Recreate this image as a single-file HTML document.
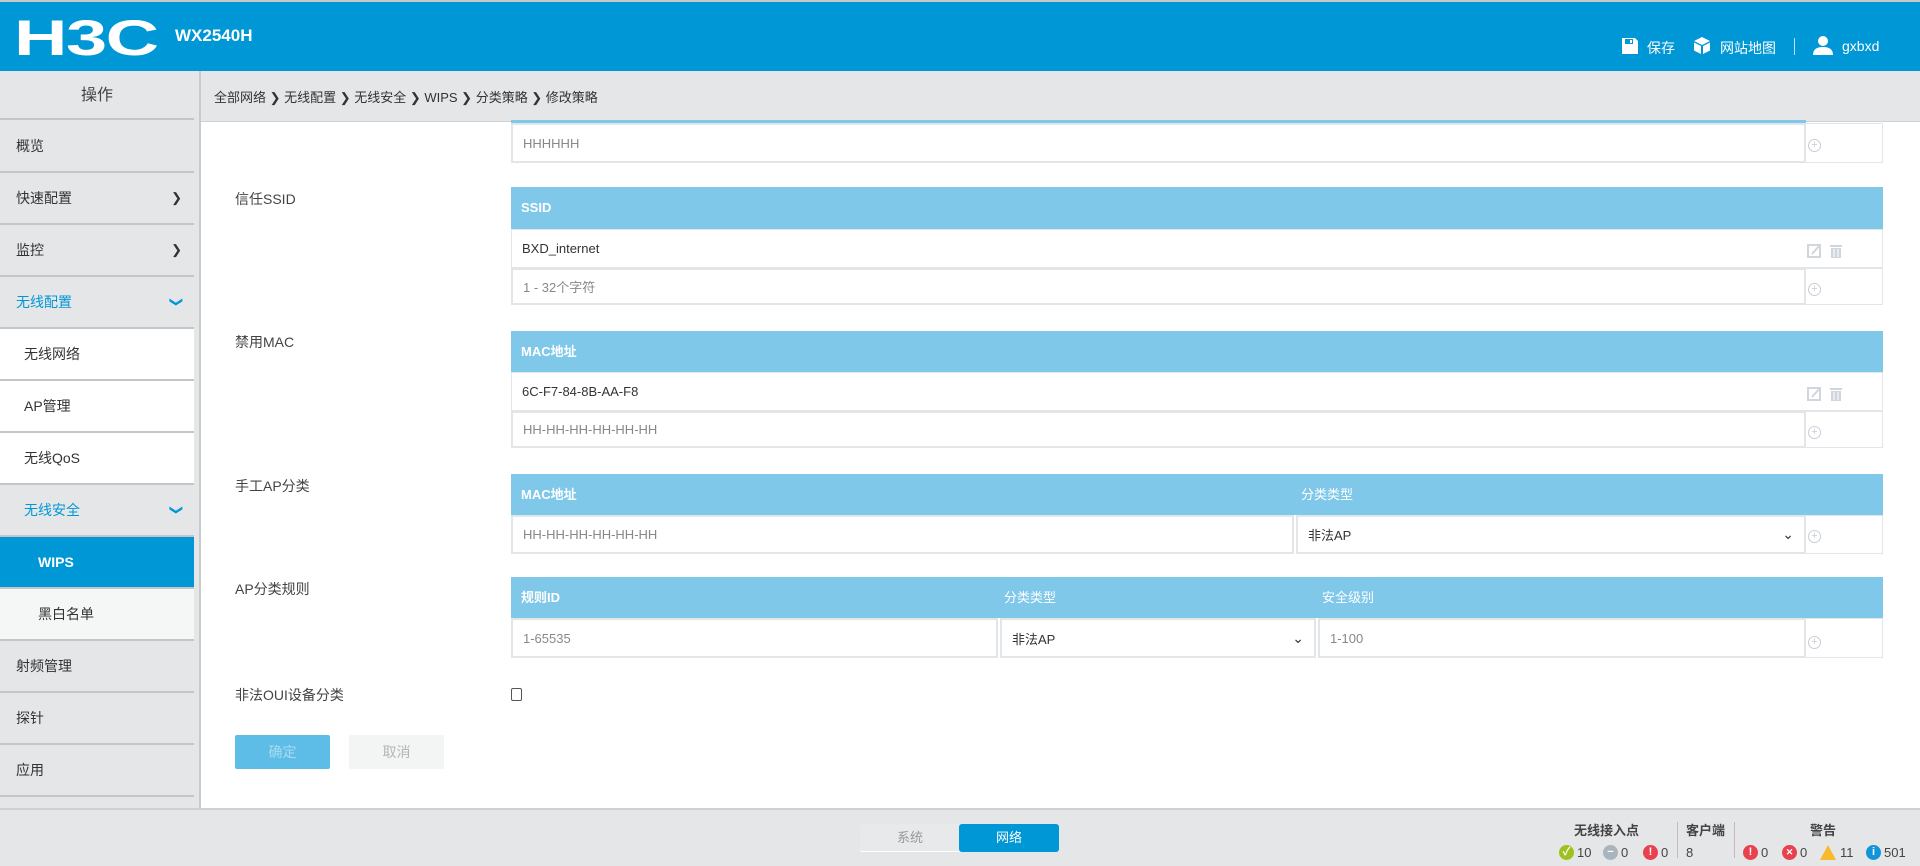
<!DOCTYPE html>
<html><head><meta charset="utf-8">
<style>
*{box-sizing:border-box;margin:0;padding:0}
body{width:1920px;height:866px;overflow:hidden;background:#fff;font-family:"Liberation Sans","Noto Sans CJK SC",sans-serif;color:#333;position:relative}
.a{position:absolute}
#hdr{left:0;top:0;width:1920px;height:71px;background:#0097d6;border-top:2px solid #c8c8c8}
#bc{left:0;top:71px;width:1920px;height:51px;background:#e5e6e8;border-bottom:1px solid #d0d0d0}
#side{left:0;top:71px;width:201px;height:737px;background:#e5e6e8;border-right:2px solid #c9cacb}
.it{position:absolute;left:0;width:194px;height:52px;line-height:50px;font-size:14px;border-bottom:2px solid #c4c5c6;padding-left:16px;color:#333}
.it.g{background:#e5e6e8}.it.w{background:#fff;padding-left:24px}
.chev{position:absolute;right:12px;top:0;font-size:13px}
.lbl{position:absolute;left:235px;font-size:14px;color:#444}
.th{position:absolute;background:#7fc8ea;color:#fff;font-size:13px;font-weight:bold;height:42px;line-height:42px;padding-left:10px}
.cell{position:absolute;border:2px solid #e3e6e8;background:#fff;font-size:13px;color:#888;padding-left:10px;display:flex;align-items:center}
.act{position:absolute;border:1px solid #e3e6e8;border-left:none;background:#fff}
.plus{position:absolute;width:13px;height:13px;border:1px solid #c8ced6;border-radius:50%;color:#c8ced6;font-size:11px;line-height:11px;text-align:center}
.dd{position:absolute;right:10px;font-size:14px;color:#333}
.st{position:absolute;font-size:13px;color:#444;display:flex;align-items:center;height:16px}
.ic{display:inline-block;width:15px;height:15px;border-radius:50%;color:#fff;font-size:11px;font-weight:bold;text-align:center;line-height:15px;margin-right:3px}
</style></head><body>
<div id="hdr" class="a">
 <div class="a" style="left:14px;top:6px;color:#fff;font-size:50px;font-weight:bold;letter-spacing:-1px;transform:scaleX(1.48);transform-origin:left;line-height:60px">H3C</div>
 <div class="a" style="left:175px;top:24px;color:#fff;font-size:17px;font-weight:bold">WX2540H</div>
 <svg class="a" style="left:1621px;top:35px" width="18" height="18" viewBox="0 0 18 18"><path d="M1 1h13l3 3v13H1z" fill="#fff"/><rect x="4" y="2" width="8" height="5" fill="#0097d6"/><rect x="9" y="3" width="2" height="3" fill="#fff"/></svg>
 <div class="a" style="left:1647px;top:36px;color:#fff;font-size:14px">保存</div>
 <svg class="a" style="left:1693px;top:34px" width="18" height="19" viewBox="0 0 18 19"><path d="M9 1l8 4-8 4-8-4z" fill="#fff"/><path d="M1 6.5l7 3.5v8l-7-3.5zM17 6.5l-7 3.5v8l7-3.5z" fill="#fff"/></svg>
 <div class="a" style="left:1720px;top:36px;color:#fff;font-size:14px">网站地图</div>
 <div class="a" style="left:1794px;top:36px;width:1px;height:17px;background:#bfe3f4"></div>
 <svg class="a" style="left:1813px;top:33px" width="20" height="20" viewBox="0 0 20 20"><circle cx="10" cy="6" r="5" fill="#fff"/><path d="M0 20c0-6 4-8 10-8s10 2 10 8z" fill="#fff"/></svg>
 <div class="a" style="left:1842px;top:36px;color:#fff;font-size:14px">gxbxd</div>
</div>
<div id="bc" class="a"><div class="a" style="left:214px;top:16px;font-size:13px;color:#333">全部网络 ❯ 无线配置 ❯ 无线安全 ❯ WIPS ❯ 分类策略 ❯ 修改策略</div></div>
<div id="side" class="a">
 <div class="a" style="left:0;top:0;width:194px;height:49px;line-height:49px;text-align:center;font-size:16px;color:#444;border-bottom:2px solid #c4c5c6">操作</div>
 <div class="it g" style="top:50px">概览</div>
 <div class="it g" style="top:102px">快速配置<span class="chev">❯</span></div>
 <div class="it g" style="top:154px">监控<span class="chev">❯</span></div>
 <div class="it g" style="top:206px;color:#0097d6">无线配置<span class="chev" style="transform:rotate(90deg);color:#0097d6">❯</span></div>
 <div class="it w" style="top:258px">无线网络</div>
 <div class="it w" style="top:310px">AP管理</div>
 <div class="it w" style="top:362px">无线QoS</div>
 <div class="it g" style="top:414px;color:#0097d6;padding-left:24px">无线安全<span class="chev" style="transform:rotate(90deg);color:#0097d6">❯</span></div>
 <div class="it" style="top:466px;background:#0097d6;color:#fff;font-weight:bold;padding-left:38px">WIPS</div>
 <div class="it" style="top:518px;background:#f5f6f6;padding-left:38px">黑白名单</div>
 <div class="it g" style="top:570px">射频管理</div>
 <div class="it g" style="top:622px">探针</div>
 <div class="it g" style="top:674px">应用</div>
</div>

<div class="a" style="left:511px;top:120px;width:1295px;height:3px;background:#7fc8ea"></div>
<div class="cell" style="left:511px;top:123px;width:1295px;height:40px">HHHHHH</div>
<div class="act" style="left:1806px;top:123px;width:77px;height:40px"></div>
<div class="plus" style="left:1808px;top:139px">+</div>

<div class="lbl" style="top:189px">信任SSID</div>
<div class="th" style="left:511px;top:187px;width:1372px">SSID</div>
<div class="cell" style="left:511px;top:229px;width:1372px;height:39px;border:1px solid #e3e6e8;color:#333">BXD_internet</div>
<svg class="a" style="left:1807px;top:243px" width="40" height="16" viewBox="0 0 40 16"><rect x="1" y="2" width="12" height="12" fill="none" stroke="#d0d6de" stroke-width="2"/><path d="M5 11l8-9" stroke="#d0d6de" stroke-width="2"/><rect x="23" y="2" width="12" height="2" fill="#d0d6de"/><rect x="24" y="5" width="10" height="10" fill="#d0d6de"/><path d="M27 6v8M31 6v8" stroke="#fff"/></svg>
<div class="cell" style="left:511px;top:268px;width:1295px;height:37px">1 - 32个字符</div>
<div class="act" style="left:1806px;top:268px;width:77px;height:37px"></div>
<div class="plus" style="left:1808px;top:283px">+</div>

<div class="lbl" style="top:332px">禁用MAC</div>
<div class="th" style="left:511px;top:331px;width:1372px">MAC地址</div>
<div class="cell" style="left:511px;top:372px;width:1372px;height:39px;border:1px solid #e3e6e8;color:#333">6C-F7-84-8B-AA-F8</div>
<svg class="a" style="left:1807px;top:386px" width="40" height="16" viewBox="0 0 40 16"><rect x="1" y="2" width="12" height="12" fill="none" stroke="#d0d6de" stroke-width="2"/><path d="M5 11l8-9" stroke="#d0d6de" stroke-width="2"/><rect x="23" y="2" width="12" height="2" fill="#d0d6de"/><rect x="24" y="5" width="10" height="10" fill="#d0d6de"/><path d="M27 6v8M31 6v8" stroke="#fff"/></svg>
<div class="cell" style="left:511px;top:411px;width:1295px;height:37px">HH-HH-HH-HH-HH-HH</div>
<div class="act" style="left:1806px;top:411px;width:77px;height:37px"></div>
<div class="plus" style="left:1808px;top:426px">+</div>

<div class="lbl" style="top:476px">手工AP分类</div>
<div class="th" style="left:511px;top:474px;width:1372px;height:41px;line-height:41px">MAC地址</div>
<div class="a" style="left:1301px;top:474px;color:#fff;font-size:13px;line-height:41px">分类类型</div>
<div class="cell" style="left:511px;top:515px;width:783px;height:39px">HH-HH-HH-HH-HH-HH</div>
<div class="cell" style="left:1296px;top:515px;width:510px;height:39px;color:#333">非法AP<span class="dd">⌄</span></div>
<div class="act" style="left:1806px;top:515px;width:77px;height:39px"></div>
<div class="plus" style="left:1808px;top:530px">+</div>

<div class="lbl" style="top:579px">AP分类规则</div>
<div class="th" style="left:511px;top:577px;width:1372px;height:41px;line-height:41px">规则ID</div>
<div class="a" style="left:1004px;top:577px;color:#fff;font-size:13px;line-height:41px">分类类型</div>
<div class="a" style="left:1322px;top:577px;color:#fff;font-size:13px;line-height:41px">安全级别</div>
<div class="cell" style="left:511px;top:618px;width:487px;height:40px">1-65535</div>
<div class="cell" style="left:1000px;top:618px;width:316px;height:40px;color:#333">非法AP<span class="dd">⌄</span></div>
<div class="cell" style="left:1318px;top:618px;width:488px;height:40px">1-100</div>
<div class="act" style="left:1806px;top:618px;width:77px;height:40px"></div>
<div class="plus" style="left:1808px;top:636px">+</div>

<div class="lbl" style="top:685px">非法OUI设备分类</div>
<div class="a" style="left:511px;top:688px;width:11px;height:13px;border:1px solid #555;border-radius:2px"></div>

<div class="a" style="left:235px;top:735px;width:95px;height:34px;background:#5dbde6;border-radius:2px;color:#a9dcf2;font-size:14px;text-align:center;line-height:34px">确定</div>
<div class="a" style="left:349px;top:735px;width:95px;height:34px;background:#f3f4f4;border-radius:2px;color:#b5b5b5;font-size:14px;text-align:center;line-height:34px">取消</div>

<div class="a" style="left:0;top:808px;width:1920px;height:58px;background:#e5e6e8;border-top:2px solid #cfd0d2"></div>
<div class="a" style="left:860px;top:824px;width:100px;height:28px;border-radius:3px 0 0 3px;background:#e8e9eb;border-bottom:1px solid #fff;color:#999;font-size:13px;text-align:center;line-height:28px">系统</div>
<div class="a" style="left:959px;top:824px;width:100px;height:28px;border-radius:3px;background:#0097d6;color:#fff;font-size:13px;text-align:center;line-height:28px">网络</div>

<div class="st" style="left:1574px;top:821px;font-weight:bold">无线接入点</div>
<div class="st" style="left:1686px;top:821px;font-weight:bold">客户端</div>
<div class="st" style="left:1810px;top:821px;font-weight:bold">警告</div>
<div class="a" style="left:1677px;top:822px;width:1px;height:36px;background:#c8b8bc"></div>
<div class="a" style="left:1734px;top:822px;width:1px;height:36px;background:#c8b8bc"></div>
<div class="st" style="left:1559px;top:844px"><span class="ic" style="background:#9dc21f">✓</span>10</div>
<div class="st" style="left:1603px;top:844px"><span class="ic" style="background:#a9b4bd">−</span>0</div>
<div class="st" style="left:1643px;top:844px"><span class="ic" style="background:#e8414f">!</span>0</div>
<div class="st" style="left:1686px;top:844px">8</div>
<div class="st" style="left:1743px;top:844px"><span class="ic" style="background:#e8414f">!</span>0</div>
<div class="st" style="left:1782px;top:844px"><span class="ic" style="background:#e8414f;font-size:9px">✕</span>0</div>
<div class="st" style="left:1820px;top:844px"><span style="display:inline-block;width:0;height:0;border-left:8px solid transparent;border-right:8px solid transparent;border-bottom:15px solid #f9b92c;margin-right:4px"></span>11</div>
<div class="st" style="left:1866px;top:844px"><span class="ic" style="background:#1295d8">i</span>501</div>
</body></html>
